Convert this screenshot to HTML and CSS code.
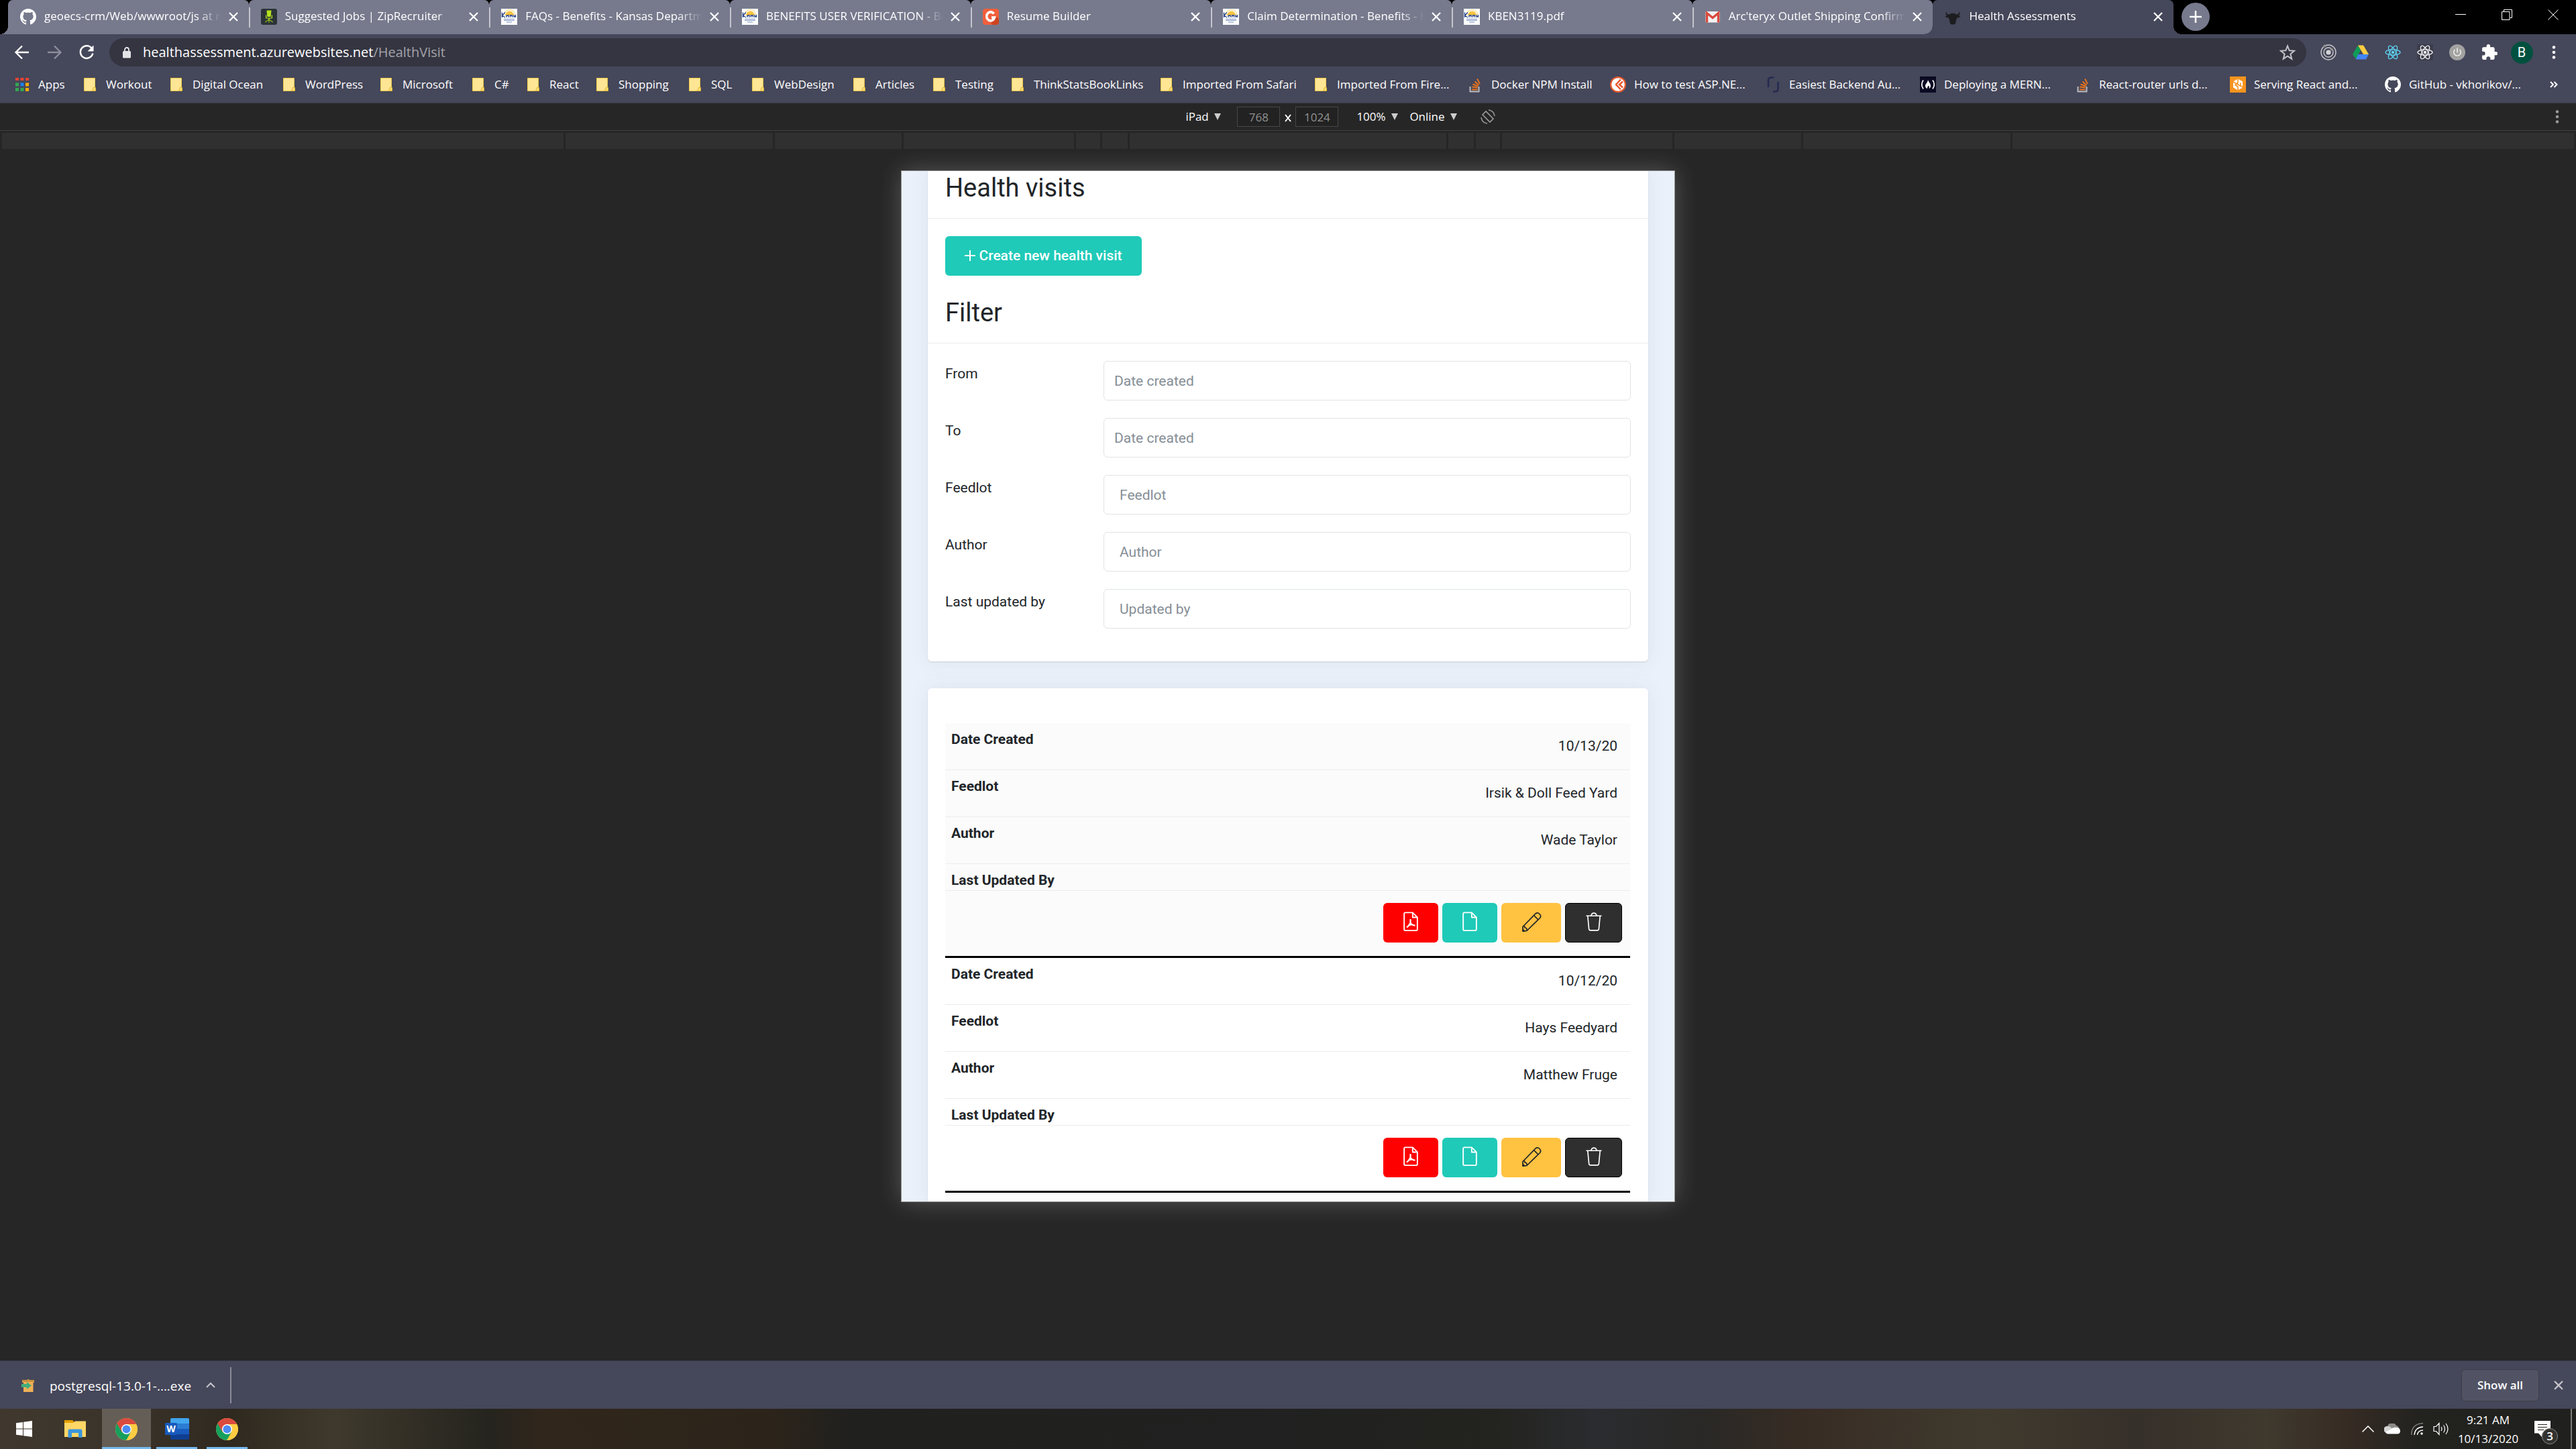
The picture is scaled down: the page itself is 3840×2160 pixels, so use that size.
FILE: index.html
```html
<!DOCTYPE html>
<html lang="en">
<head>
<meta charset="utf-8">
<meta name="viewport" content="width=device-width, initial-scale=1">
<title>Health Assessments</title>
<link rel="stylesheet" href="styles.css">
</head>
<body>
<svg class="defs" aria-hidden="true">
  <defs>
    <symbol id="github" viewBox="0 0 16 16"><path fill="#fff" d="M8 0C3.58 0 0 3.58 0 8c0 3.54 2.29 6.53 5.47 7.59.4.07.55-.17.55-.38 0-.19-.01-.82-.01-1.49-2.01.37-2.53-.49-2.69-.94-.09-.23-.48-.94-.82-1.13-.28-.15-.68-.52-.01-.53.63-.01 1.08.58 1.23.82.72 1.21 1.87.87 2.33.66.07-.52.28-.87.51-1.07-1.78-.2-3.64-.89-3.64-3.95 0-.87.31-1.59.82-2.15-.08-.2-.36-1.02.08-2.12 0 0 .67-.21 2.2.82.64-.18 1.32-.27 2-.27s1.36.09 2 .27c1.53-1.04 2.2-.82 2.2-.82.44 1.1.16 1.92.08 2.12.51.56.82 1.27.82 2.15 0 3.07-1.87 3.75-3.65 3.95.29.25.54.73.54 1.48 0 1.07-.01 1.93-.01 2.2 0 .21.15.46.55.38A8.01 8.01 0 0 0 16 8c0-4.42-3.58-8-8-8z"/></symbol>
    <symbol id="zip" viewBox="0 0 24 24"><rect width="24" height="24" rx="3" fill="#2b3338"/><path fill="#b4e11e" d="M8.500 2.500h7l-.8 9.500h-5.400zM7 9.500h1.200v4h7.600v-4H17v5h-4.200v2.200h-1.600v-2.200H7z"/><path d="M12 16l-5 3.500M12 16l5 3.500M12 16v5M7 18.500v2M17 18.500v2" stroke="#8fb51c" stroke-width="1.200" fill="none"/></symbol>
    <symbol id="kansas" viewBox="0 0 24 24"><rect width="24" height="24" fill="#fff"/><path d="M6 10a6.500 6.500 0 0 1 13 0z" fill="#f9c440"/><path d="M4 10a8.500 8.500 0 0 1 17 0" fill="none" stroke="#fae3a0" stroke-width="1.500"/><path d="M1.500 5.500v7.500M6 5.500l-4.500 4.500L6 13M8 9.500v3.500M11 9v4M13.500 9v4M16.500 9v4M19 9v4M21.500 9v4M8 10h3M13.500 10h3M19 11.500h3" stroke="#24418a" stroke-width="1.300" fill="none"/><path d="M4 15.500h16M4 17.500h16M8 20h8" stroke="#7d92c0" stroke-width="1.100"/></symbol>
    <symbol id="g2" viewBox="0 0 24 24"><rect width="24" height="24" rx="4" fill="#f15f3c"/><path d="M12 21l9-9 3 3v5a4 4 0 0 1-4 4h-6z" fill="#cf4421"/><path d="M16.500 7.500A6 6.500 0 1 0 17.500 13h-4.500" fill="none" stroke="#fff" stroke-width="3.600"/></symbol>
    <symbol id="gmail" viewBox="0 0 24 24"><rect x="1.500" y="4" width="21" height="16.500" rx="1.500" fill="#f2f2f2"/><path d="M3.500 20.500V6.500L12 13.500l8.500-7v14" fill="none" stroke="#d9493c" stroke-width="3.400"/></symbol>
    <symbol id="cow" viewBox="0 0 24 24"><path fill="#1d1d20" d="M3 4c-1 3 1 4.500 4 4.500C9 6 15 6 17 8.500c3 0 5-1.500 4-4.500 2 2 2 5-.5 6.500l3 .5c-1 2-3.500 2.500-5.500 2.500-.5 3-1.500 5-2 8.500-1.500 2-6.500 2-8 0C7.500 18.500 6.500 16.500 6 13.500c-2 0-4.500-.5-5.500-2.500l3-.5C1 9 1 6 3 4z"/></symbol>
    <symbol id="x" viewBox="0 0 16 16"><path d="M2 2l12 12M14 2L2 14" stroke="currentColor" stroke-width="2.300" fill="none"/></symbol>
    <symbol id="folder" viewBox="0 0 24 24"><path fill="#ffe694" stroke="#ecc84c" d="M3.500 2.500h16v19h-16z"/><path fill="#ffdf73" stroke="#dfb738" d="M17.500 16.500h3v5h-5z"/></symbol>
    <symbol id="stack" viewBox="0 0 24 24"><path d="M4.500 15v7.500h13V15" fill="none" stroke="#b9bbc0" stroke-width="2"/><path d="M7 19.500h8.500M7.300 15.500l8.300 1M8.500 11.500l7.700 3M11.500 7.500l6 5.500M15 3.500l4 7.500" stroke="#e8731c" stroke-width="2" fill="none"/></symbol>
    <symbol id="dotnet" viewBox="0 0 24 24"><circle cx="12" cy="12" r="12" fill="#e8592c"/><circle cx="12" cy="12" r="9.800" fill="#fff"/><path d="M16 4.500L9 12l7 7.500M19 7.500L14 12l5 4.500" fill="none" stroke="#e8592c" stroke-width="2.500"/></symbol>
    <symbol id="brackets" viewBox="0 0 24 24"><path d="M13 1.500H9.500Q5 1.500 5 6v10M12 22.500h3q4.500 0 4.500-4.500V8" fill="none" stroke="#252b52" stroke-width="2.600"/></symbol>
    <symbol id="fcc" viewBox="0 0 24 24"><rect width="24" height="24" fill="#0a0a23"/><path d="M5 5.500q-4.500 6.500 0 13M19 5.500q4.500 6.500 0 13" stroke="#fff" stroke-width="1.700" fill="none"/><path fill="#fff" d="M12 5c.5 3 4 5 4 9 0 2-1 3.500-2.500 4 1-2 .5-3-1-4.500-.5 2-2 2.500-1.500 4.500C9 17.500 8 16 8 14c0-3 3.500-4.500 4-9z"/></symbol>
    <symbol id="serve" viewBox="0 0 24 24"><rect width="24" height="24" fill="#f7941e"/><path d="M12 3.500l7 4v9l-7 4-7-4v-9z" fill="#fff"/><path d="M12 3.500v6l-4 3 4 3v5M5 8l7 4M19 16l-7-4M16 9.500v5" stroke="#f7941e" stroke-width="1.600" fill="none"/></symbol>
    <symbol id="react" viewBox="0 0 24 24"><g fill="none" stroke="currentColor" stroke-width="1.300"><ellipse cx="12" cy="12" rx="11" ry="4.200"/><ellipse cx="12" cy="12" rx="11" ry="4.200" transform="rotate(60 12 12)"/><ellipse cx="12" cy="12" rx="11" ry="4.200" transform="rotate(120 12 12)"/></g><circle cx="12" cy="12" r="2.200" fill="currentColor"/></symbol>
    <symbol id="kebab" viewBox="0 0 24 24"><g fill="currentColor"><circle cx="12" cy="4.500" r="2.300"/><circle cx="12" cy="12" r="2.300"/><circle cx="12" cy="19.500" r="2.300"/></g></symbol>
    <symbol id="caret" viewBox="0 0 10 10"><path d="M0 0h10L5 10z" fill="#ccc"/></symbol>
    <symbol id="chrome" viewBox="0 0 48 48"><circle cx="24" cy="24" r="24" fill="#ffcd42"/><path d="M24 24L3.200 12A24 24 0 0 0 23 48l12-18z" fill="#17a05d"/><path d="M24 24v-11h21.200A24 24 0 0 0 3.400 11.700L14 30z" fill="#db4a3f"/><path d="M24 13h21.200A24 24 0 0 1 24 48l9.500-18.500z" fill="#ffcd42"/><circle cx="24" cy="24" r="11" fill="#fff"/><circle cx="24" cy="24" r="8.800" fill="#4c8bf5"/></symbol>
    <symbol id="pdf" viewBox="0 0 24 32"><g fill="none" stroke="currentColor" stroke-width="2" stroke-linejoin="round"><path d="M1.500 3.500q0-2 2-2H15l7.500 7.500v19q0 2-2 2h-17q-2 0-2-2z"/><path d="M15 1.500V9h7.500"/></g><path d="M11.500 12v5.500q-1.500 4.500-6 7.500M11.500 17.500q2 4 7.500 4.500M8 21.800q4-1.500 8-1" fill="none" stroke="currentColor" stroke-width="2.400"/></symbol>
    <symbol id="file" viewBox="0 0 24 32"><g fill="none" stroke="currentColor" stroke-width="2" stroke-linejoin="round"><path d="M1.500 3.500q0-2 2-2H15l7.500 7.500v19q0 2-2 2h-17q-2 0-2-2z"/><path d="M15 1.500V9h7.500"/></g></symbol>
    <symbol id="pencil" viewBox="0 0 30 30"><g fill="none" stroke="currentColor" stroke-width="1.700" stroke-linejoin="round"><path d="M2 22.500L21 3q3-2.500 6 .5t.5 6L8 28.500l-6 .8z"/><path d="M18.500 5.500l6.500 6.500M2.500 21.500q3 0 2.500 2.500 3.500 0 3 4"/></g><path d="M2 25l4 4-4 .5z" fill="currentColor"/></symbol>
    <symbol id="trash" viewBox="0 0 26 30"><g fill="none" stroke="currentColor" stroke-width="1.800" stroke-linejoin="round"><path d="M.5 5.500h25M8.500 5q1-4 4.500-4t4.500 4M3 5.500l2 21q.3 2.500 2.500 2.500h11q2.200 0 2.500-2.500l2-21"/></g></symbol>
  </defs>
</svg>

<header class="browser">
  <div class="tabstrip">
    <nav class="tabs" aria-label="Tabs">
      <div class="tab tab-first"><svg class="fav"><use href="#github"/></svg><span class="tab-title">geoecs-crm/Web/wwwroot/js at master</span><button class="tab-close" aria-label="Close tab"><svg><use href="#x"/></svg></button></div>
      <div class="tab"><svg class="fav"><use href="#zip"/></svg><span class="tab-title">Suggested Jobs | ZipRecruiter</span><button class="tab-close" aria-label="Close tab"><svg><use href="#x"/></svg></button></div>
      <div class="tab"><svg class="fav"><use href="#kansas"/></svg><span class="tab-title">FAQs - Benefits - Kansas Department</span><button class="tab-close" aria-label="Close tab"><svg><use href="#x"/></svg></button></div>
      <div class="tab"><svg class="fav"><use href="#kansas"/></svg><span class="tab-title">BENEFITS USER VERIFICATION - Benefits</span><button class="tab-close" aria-label="Close tab"><svg><use href="#x"/></svg></button></div>
      <div class="tab"><svg class="fav"><use href="#g2"/></svg><span class="tab-title">Resume Builder</span><button class="tab-close" aria-label="Close tab"><svg><use href="#x"/></svg></button></div>
      <div class="tab"><svg class="fav"><use href="#kansas"/></svg><span class="tab-title">Claim Determination - Benefits - Kansas</span><button class="tab-close" aria-label="Close tab"><svg><use href="#x"/></svg></button></div>
      <div class="tab"><svg class="fav"><use href="#kansas"/></svg><span class="tab-title">KBEN3119.pdf</span><button class="tab-close" aria-label="Close tab"><svg><use href="#x"/></svg></button></div>
      <div class="tab tab-last"><svg class="fav"><use href="#gmail"/></svg><span class="tab-title">Arc'teryx Outlet Shipping Confirmation</span><button class="tab-close" aria-label="Close tab"><svg><use href="#x"/></svg></button></div>
      <div class="tab tab-active"><svg class="fav"><use href="#cow"/></svg><span class="tab-title">Health Assessments</span><button class="tab-close" aria-label="Close tab"><svg><use href="#x"/></svg></button></div>
    </nav>
    <button class="new-tab" aria-label="New tab"><svg viewBox="0 0 18 18"><path d="M9 0v18M0 9h18" stroke="#fff" stroke-width="2.500"/></svg></button>
    <div class="window-controls">
      <button aria-label="Minimize"><svg viewBox="0 0 16 16"><path d="M0 7.500h16" stroke="#fff" stroke-width="1"/></svg></button>
      <button aria-label="Restore"><svg viewBox="0 0 16 16"><path d="M.5 3.500h11.500v12H.5zM3.500 3.500V.5h12v12h-3" fill="none" stroke="#fff"/></svg></button>
      <button aria-label="Close"><svg viewBox="0 0 16 16"><path d="M.5.5l15 15M15.500.5l-15 15" stroke="#fff"/></svg></button>
    </div>
  </div>

  <div class="toolbar">
    <button class="tool" aria-label="Back"><svg viewBox="0 0 24 24"><path d="M22 12H3M12 2.500L2.500 12l9.500 9.500" fill="none" stroke="#fff" stroke-width="2.400"/></svg></button>
    <button class="tool" aria-label="Forward"><svg viewBox="0 0 24 24"><path d="M2 12h19M12 2.500l9.500 9.500-9.500 9.500" fill="none" stroke="#8c8d9c" stroke-width="2.400"/></svg></button>
    <button class="tool" aria-label="Reload"><svg viewBox="0 0 24 24"><path d="M20 6.500A9.300 9.300 0 1 0 21.300 13.500" fill="none" stroke="#fff" stroke-width="2.500"/><path d="M22.500 1.500v9h-9z" fill="#fff"/></svg></button>
    <form class="omnibox">
      <svg class="lock" viewBox="0 0 12 18"><path d="M3 8V5a3 3 0 0 1 6 0v3" fill="none" stroke="#e4e4e8" stroke-width="1.800"/><rect y="7" width="12" height="10.500" rx="1.500" fill="#e4e4e8"/></svg>
      <a class="url" href="#">healthassessment.azurewebsites.net<span class="url-path">/HealthVisit</span></a>
      <button class="star" type="button" aria-label="Bookmark this page"><svg viewBox="0 0 24 24"><path d="M12 2.500l2.700 6.800 7.300.5-5.600 4.700 1.800 7.200-6.200-4-6.200 4 1.800-7.200L2 9.800l7.300-.5z" fill="none" stroke="#c3c3c8" stroke-width="2"/></svg></button>
    </form>
    <div class="extensions">
      <button class="tool" aria-label="Orbit"><svg viewBox="0 0 24 24"><g fill="none" stroke="#c8c8cb" stroke-width="1.400"><circle cx="12" cy="12" r="11"/><circle cx="12" cy="12" r="7"/></g><circle cx="12" cy="12" r="3.600" fill="#d2d2d4"/><circle cx="6.500" cy="2.500" r="2" fill="#8f8f90"/><circle cx="16.500" cy="7.500" r="2" fill="#8f8f90"/></svg></button>
      <button class="tool" aria-label="Drive"><svg viewBox="0 0 24 24"><path d="M8 1.500l4 7L5 22l-5-7z" fill="#0f9d58"/><path d="M8 1.500h8L24 15h-8z" fill="#ffcd40"/><path d="M8.500 15H24l-4 7.500H4.500z" fill="#4285f4"/></svg></button>
      <button class="tool react-on" aria-label="React tools"><svg><use href="#react"/></svg></button>
      <button class="tool react-off" aria-label="React inspector"><svg><use href="#react"/></svg></button>
      <button class="tool" aria-label="Power"><svg viewBox="0 0 24 24"><circle cx="12" cy="12" r="12" fill="#a2a2a1"/><path d="M12 5.500v7M8.500 8a5.200 5.200 0 1 0 7 0" fill="none" stroke="#f2f2f2" stroke-width="1.500"/></svg></button>
      <button class="tool" aria-label="Extensions"><svg viewBox="1 1 22 22"><path fill="#fff" d="M20.500 11H19V7c0-1.100-.9-2-2-2h-4V3.500a2.500 2.500 0 0 0-5 0V5H4c-1.100 0-2 .9-2 2v3.800h1.500a2.700 2.700 0 0 1 0 5.400H2V20c0 1.100.9 2 2 2h3.800v-1.500a2.700 2.700 0 0 1 5.400 0V22H17c1.100 0 2-.9 2-2v-4h1.500a2.500 2.500 0 0 0 0-5z"/></svg></button>
      <button class="tool"><span class="avatar">B</span></button>
      <button class="tool menu" aria-label="Menu"><svg><use href="#kebab"/></svg></button>
    </div>
  </div>

  <nav class="bookmarks" aria-label="Bookmarks">
    <a href="#"><svg viewBox="0 0 24 24"><path fill="#ea4335" d="M2 2h5v4H2zM9.500 2h5v4h-5zM17 2h5v4h-5z"/><path fill="#34a853" d="M2 9.500h5v5H2zM2 17h5v5H2zM9.500 17h5v5h-5z"/><path fill="#1a80f5" d="M9.500 9.500h5v5h-5z"/><path fill="#fbaa05" d="M17 9.500h5v5h-5zM17 17h5v5h-5z"/></svg>Apps</a>
    <a href="#"><svg><use href="#folder"/></svg>Workout</a>
    <a href="#"><svg><use href="#folder"/></svg>Digital Ocean</a>
    <a href="#"><svg><use href="#folder"/></svg>WordPress</a>
    <a href="#"><svg><use href="#folder"/></svg>Microsoft</a>
    <a href="#"><svg><use href="#folder"/></svg>C#</a>
    <a href="#"><svg><use href="#folder"/></svg>React</a>
    <a href="#"><svg><use href="#folder"/></svg>Shopping</a>
    <a href="#"><svg><use href="#folder"/></svg>SQL</a>
    <a href="#"><svg><use href="#folder"/></svg>WebDesign</a>
    <a href="#"><svg><use href="#folder"/></svg>Articles</a>
    <a href="#"><svg><use href="#folder"/></svg>Testing</a>
    <a href="#"><svg><use href="#folder"/></svg>ThinkStatsBookLinks</a>
    <a href="#"><svg><use href="#folder"/></svg>Imported From Safari</a>
    <a href="#"><svg><use href="#folder"/></svg>Imported From Fire...</a>
    <a href="#"><svg><use href="#stack"/></svg>Docker NPM Install</a>
    <a href="#"><svg><use href="#dotnet"/></svg>How to test ASP.NE...</a>
    <a href="#"><svg><use href="#brackets"/></svg>Easiest Backend Au...</a>
    <a href="#"><svg><use href="#fcc"/></svg>Deploying a MERN...</a>
    <a href="#"><svg><use href="#stack"/></svg>React-router urls d...</a>
    <a href="#"><svg><use href="#serve"/></svg>Serving React and...</a>
    <a href="#"><svg><use href="#github"/></svg>GitHub - vkhorikov/...</a>
    <button class="overflow" aria-label="More bookmarks"><svg viewBox="0 0 12 10"><path d="M1 1l4 4-4 4M6.500 1l4 4-4 4" fill="none" stroke="#fff" stroke-width="2"/></svg></button>
  </nav>
</header>

<main class="emulator">
  <div class="device-bar">
    <form class="device-tools">
      <label class="picker"><select aria-label="Device"><option>iPad</option></select><svg><use href="#caret"/></svg></label>
      <input class="size" value="768" aria-label="Width">
      <span class="times"><svg viewBox="0 0 12 12"><path d="M2 1l8 10M10 1L2 11" stroke="#fff" stroke-width="2"/></svg></span>
      <input class="size" value="1024" aria-label="Height">
      <label class="picker"><select aria-label="Zoom"><option>100%</option></select><svg><use href="#caret"/></svg></label>
      <label class="picker"><select aria-label="Throttling"><option>Online</option></select><svg><use href="#caret"/></svg></label>
      <button class="rotate" type="button" aria-label="Rotate"><svg viewBox="0 0 24 24"><g fill="none" stroke="#9a9a9a" stroke-width="1.600"><path d="M4 9l5-5 11 11-5 5z"/><path d="M13 2q8 1 9 9M11 22q-8-1-9-9"/></g></svg></button>
    </form>
    <button class="device-menu" aria-label="More options"><svg><use href="#kebab"/></svg></button>
  </div>
  <div class="breakpoints"><i></i><i></i><i></i><i></i><i></i><i></i><i></i><i></i><i></i><i></i><i></i><i></i><i></i></div>

  <div class="stage">
    <div class="device">
      <section class="card card-filter">
        <h1>Health visits</h1>
        <div class="card-actions">
          <button class="create"><svg viewBox="0 0 16 16"><path d="M8 0v16M0 8h16" stroke="#fff" stroke-width="2"/></svg>Create new health visit</button>
        </div>
        <h1>Filter</h1>
        <form class="filters">
          <label for="from">From</label><input id="from" class="date" placeholder="Date created">
          <label for="to">To</label><input id="to" class="date" placeholder="Date created">
          <label for="feedlot">Feedlot</label><input id="feedlot" placeholder="Feedlot">
          <label for="author">Author</label><input id="author" placeholder="Author">
          <label for="updated">Last updated by</label><input id="updated" placeholder="Updated by">
        </form>
      </section>

      <section class="card card-list">
        <table class="visits">
          <tbody>
            <tr><th scope="row">Date Created</th><td>10/13/20</td></tr>
            <tr><th scope="row">Feedlot</th><td>Irsik &amp; Doll Feed Yard</td></tr>
            <tr><th scope="row">Author</th><td>Wade Taylor</td></tr>
            <tr class="row-short"><th scope="row">Last Updated By</th><td></td></tr>
            <tr class="row-actions"><td colspan="2"><div class="actions">
              <button class="act act-pdf" aria-label="PDF"><svg><use href="#pdf"/></svg></button>
              <button class="act act-file" aria-label="Open"><svg><use href="#file"/></svg></button>
              <button class="act act-edit" aria-label="Edit"><svg><use href="#pencil"/></svg></button>
              <button class="act act-delete" aria-label="Delete"><svg><use href="#trash"/></svg></button>
            </div></td></tr>
          </tbody>
          <tbody>
            <tr><th scope="row">Date Created</th><td>10/12/20</td></tr>
            <tr><th scope="row">Feedlot</th><td>Hays Feedyard</td></tr>
            <tr><th scope="row">Author</th><td>Matthew Fruge</td></tr>
            <tr class="row-short"><th scope="row">Last Updated By</th><td></td></tr>
            <tr class="row-actions"><td colspan="2"><div class="actions">
              <button class="act act-pdf" aria-label="PDF"><svg><use href="#pdf"/></svg></button>
              <button class="act act-file" aria-label="Open"><svg><use href="#file"/></svg></button>
              <button class="act act-edit" aria-label="Edit"><svg><use href="#pencil"/></svg></button>
              <button class="act act-delete" aria-label="Delete"><svg><use href="#trash"/></svg></button>
            </div></td></tr>
          </tbody>
          <tbody>
            <tr class="row-edge"><td colspan="2"></td></tr>
          </tbody>
        </table>
      </section>
    </div>
  </div>
</main>

<footer class="bottom">
  <div class="downloads">
    <button class="download"><svg class="box" viewBox="0 0 20 22"><path d="M1 3h5l4-2 4 2h5v3h-1.500v14H3V6H1z" fill="#efb057"/><path d="M1 2h18v3H1z" fill="#c98f3d"/><path d="M0 8h8V5l7 5.500L8 16v-3H0z" fill="#3fae7c"/></svg><span>postgresql-13.0-1-....exe</span></button>
    <button class="download-menu" aria-label="Download options"><svg viewBox="0 0 14 9"><path d="M1 8l6-6 6 6" fill="none" stroke="#c2c2c8" stroke-width="2.200"/></svg></button>
    <button class="show-all">Show all</button>
    <button class="close-shelf" aria-label="Close downloads"><svg><use href="#x"/></svg></button>
  </div>
  <div class="taskbar">
    <button class="start" aria-label="Start"><svg viewBox="0 0 24 24"><path fill="#fff" d="M0 3.300l10-1.400v9.600H0zM11 1.800L24 0v11.500H11zM0 12.500h10v9.600L0 20.700zM11 12.500h13V24l-13-1.800z"/></svg></button>
    <button class="app explorer" aria-label="File Explorer"><svg viewBox="0 0 32 28"><path d="M0 1h12l3 3v6H0z" fill="#e5a000"/><path d="M0 5h13l3-2.500h16V26H0z" fill="#ffd766"/><path d="M5.500 26V17q0-2.500 2.500-2.500h16q2.500 0 2.500 2.500v10H21v-7H11v7H5.500z" fill="#3a96dd"/></svg></button>
    <button class="app app-open app-active" aria-label="Chrome"><svg><use href="#chrome"/></svg></button>
    <button class="app app-open" aria-label="Word"><svg class="word" viewBox="0 0 36 32"><path d="M8 2q0-2 2-2h24q2 0 2 2v6H8z" fill="#41a5ee"/><path d="M8 8h28v8H8z" fill="#2b7cd3"/><path d="M8 16h28v8H8z" fill="#185abd"/><path d="M8 24h28v6q0 2-2 2H10q-2 0-2-2z" fill="#103f91"/><rect y="7" width="18" height="18" rx="1.500" fill="#185abd"/><text class="word-letter" x="9" y="21" text-anchor="middle">W</text></svg></button>
    <button class="app app-open" aria-label="Chrome, second window"><svg><use href="#chrome"/></svg></button>
    <div class="tray">
      <svg class="up" viewBox="0 0 18 10"><path d="M.5 9.500L9 1l8.500 8.500" fill="none" stroke="#fff" stroke-width="1.500"/></svg>
      <svg class="cloud" viewBox="0 0 24 16"><path d="M5 4a7 7 0 0 1 13-1 5 5 0 0 1 4 4L10 9z" fill="#8d8b88"/><path d="M4 14a5 5 0 0 1 1-10q4-.5 6 3l9 5z" fill="#d4d4d4"/><path d="M2 12.500q6-2 10-5.500 4-2 6-1a5 5 0 0 1 6 5q0 4.500-4.500 4.500h-14Q3 15.500 2 12.500z" fill="#fff"/></svg>
      <svg class="wifi" viewBox="0 0 18 18"><g fill="none" stroke="#fff" stroke-width="1.300"><path d="M.7 18Q.7 1.500 18 .7" stroke="#8a8a86"/><path d="M5 18Q6 6.500 18 6M9.500 18q.5-6.500 8.500-7"/></g><circle cx="16" cy="16" r="1.800" fill="#fff"/></svg>
      <svg class="sound" viewBox="0 0 24 20"><g fill="none" stroke="#fff" stroke-width="1.200"><path d="M1 6.500h3.500L9 1.500v17l-4.500-5H1zM12 7q2 3 0 6M15.500 4.500q4 5.500 0 11M19 2q6 8 0 16"/></g></svg>
      <time class="clock">9:21 AM<br>10/13/2020</time>
      <div class="notices"><svg viewBox="0 0 24 24"><path d="M0 0h24v18.500H12L11 24l-5-5.500H0z" fill="#fff"/><path d="M5 5.500h14M5 9.500h14M5 13.500h9" stroke="#24231f" stroke-width="1.200"/></svg><span class="badge">3</span></div>
    </div>
  </div>
</footer>
</body>
</html>
```
FILE: styles.css
```css
:root {
  --chrome: #45475a;
  --tab: #777a8d;
  --panel: #262626;
  --ui: "Open Sans", "Noto Sans", sans-serif;
  --page: Roboto, sans-serif;
}

* { box-sizing: border-box; }

body {
  margin: 0;
  min-height: 100vh;
  display: flex;
  flex-direction: column;
  background: var(--panel);
  color: #fff;
  font: 17px/24px var(--ui);
}

svg { display: block; flex: none; }
.defs { width: 0; height: 0; position: absolute; }

button, select, input { font: inherit; color: inherit; }
button {
  display: flex;
  align-items: center;
  justify-content: center;
  padding: 0;
  border: 0;
  background: none;
}
a { color: inherit; text-decoration: none; }

/* Tab strip */
.tabstrip { display: flex; height: 51px; background: #000; }
.tabs { display: flex; flex: 0 1 3228px; margin-left: 12px; min-width: 0; }
.tab {
  position: relative;
  display: flex;
  flex: 1 1 0;
  align-items: center;
  min-width: 0;
  padding: 0 15px 1px 18px;
  background: var(--tab);
  border-radius: 7px 7px 0 0;
}
.tab + .tab::before {
  content: "";
  position: absolute;
  left: 0;
  top: 11px;
  width: 2px;
  height: 30px;
  background: #c4c5cd;
}
.tab-first::before {
  content: "";
  position: absolute;
  left: -12px;
  bottom: 0;
  width: 12px;
  height: 12px;
  background: radial-gradient(circle at 0 0, transparent 12px, var(--tab) 12px);
}
.tab-last { box-shadow: 12px 0 0 -6px var(--chrome); border-bottom-right-radius: 9px; }
.tab.tab-active { background: var(--chrome); }
.tab.tab-active::before { left: -12px; top: auto; bottom: 0; width: 12px; height: 12px; background: radial-gradient(circle at 0 0, transparent 11px, var(--chrome) 12px); }
.tab-active::after {
  content: "";
  position: absolute;
  right: -12px;
  bottom: 0;
  width: 12px;
  height: 12px;
  background: radial-gradient(circle at 100% 0, transparent 12px, var(--chrome) 12px);
}
.fav { width: 24px; height: 24px; }
.tab-title {
  flex: 1;
  min-width: 0;
  margin-left: 12px;
  margin-right: 10px;
  padding-bottom: 2px;
  overflow: hidden;
  white-space: nowrap;
  mask-image: linear-gradient(to left, transparent, #000 36px);
}
.tab-close { width: 16px; height: 16px; }
.tab-close svg { width: 16px; height: 16px; }
.new-tab { width: 42px; height: 42px; margin: 4px 0 0 12px; border-radius: 50%; background: var(--tab); }
.new-tab svg { width: 18px; height: 18px; }
.window-controls { display: flex; margin-left: auto; }
.window-controls button { width: 69px; height: 43px; }
.window-controls svg { width: 16px; height: 16px; }

/* Address bar */
.toolbar { display: flex; align-items: center; height: 48px; padding: 6px 9px 0; background: var(--chrome); }
.tool { width: 48px; height: 42px; }
.tool svg { width: 24px; height: 24px; }
.omnibox {
  display: flex;
  flex: 1;
  align-items: center;
  height: 42px;
  margin: 0 9px 0 10px;
  padding: 0 16px 0 20px;
  border-radius: 21px;
  background: #343541;
}
.lock { width: 12px; height: 18px; }
.url { margin-left: 18px; font-size: 20px; }
.url-path { color: #a3a3a9; }
.star { margin-left: auto; }
.star svg { width: 24px; height: 24px; }
.extensions { display: flex; }
.react-on { color: #5ed3f3; }
.react-off svg { color: #f2f2f2; background: #3b3d4c; }
.avatar { width: 33px; height: 33px; border-radius: 50%; background: #00503f; font: 20px/33px var(--page); }

/* Bookmarks */
.bookmarks {
  display: grid;
  grid-template-columns: 101px 129px 168px 145px 137px 82px 103px 138px 94px 151px 119px 117px 222px 230px 230px 213px 231px 231px 231px 231px 231px 231px 1fr;
  align-items: center;
  height: 55px;
  padding: 0 27px 0 21px;
  border-bottom: 1px solid #3b3c48;
  background: var(--chrome);
  white-space: nowrap;
  overflow: hidden;
}
.bookmarks a { display: flex; align-items: center; gap: 12px; }
.bookmarks a svg { width: 24px; height: 24px; }
.overflow { justify-self: end; }
.overflow svg { width: 12px; height: 10px; }

/* Device toolbar */
.emulator { display: flex; flex: 1; flex-direction: column; }
.device-bar {
  display: grid;
  grid-template-columns: 46% auto 1fr;
  align-items: center;
  height: 41px;
  border-bottom: 1px solid #404040;
}
.device-tools {
  grid-column: 2;
  display: grid;
  grid-template-columns: 77px 64px 23px 91px 79px 105px 24px;
  align-items: center;
  padding-left: 1px;
}
.picker { display: flex; align-items: center; gap: 8px; }
.picker select { appearance: none; padding: 0; border: 0; background: none; }
.picker svg { width: 10px; height: 10px; }
.size { width: 64px; height: 30px; padding: 0; border: 1px solid #474747; background: #222; color: #909090; text-align: center; }
.times { display: grid; place-items: center; padding: 4px 0 0; }
.times svg { width: 12px; height: 12px; }
.rotate svg { width: 24px; height: 24px; }
.device-menu { justify-self: end; margin-right: 16px; color: #9a9a9a; }
.device-menu svg { width: 24px; height: 24px; }
.breakpoints {
  display: grid;
  grid-template-columns: 1fr 309px 189px 254px 36px 38px 472px 38px 36px 254px 189px 309px 1fr;
  gap: 3px;
  margin-top: 3px;
  padding: 0 3px;
}
.breakpoints i { height: 24px; background: #303030; }

/* Emulated viewport */
.stage { display: flex; flex: 1; justify-content: center; align-items: flex-start; padding: 33px 16px 48px; }
.device {
  flex: 0 1 1152px;
  min-width: 0;
  padding: 0 39px;
  overflow: hidden;
  background: #ebf1fa;
  color: #212529;
  font: 21px/30px var(--page);
  box-shadow: 0 0 0 1px #8c8c8c, 0 0 34px rgba(255, 255, 255, .24);
}
.card { background: #fff; box-shadow: 0 0 30px rgba(60, 80, 110, .08), 0 1px 2px rgba(0, 0, 0, .12); }
.card-filter { margin-bottom: 40px; padding-bottom: 49px; border-radius: 0 0 6px 6px; }
.card-list { padding: 52px 27px 0 26px; border-radius: 6px 6px 0 0; }
h1 { margin: 0; padding: 0 26px 20px; border-bottom: 1px solid #ededed; font-size: 38px; font-weight: 400; line-height: 50px; }
.card-actions { padding: 26px 26px 30px; }
.create {
  width: 293px;
  height: 59px;
  gap: 5px;
  padding-bottom: 2px;
  border-radius: 6px;
  background: #1fcab8;
  color: #fff;
  font-weight: 500;
}
.create svg { width: 16px; height: 16px; }
.filters { display: grid; grid-template-columns: 236px 1fr; row-gap: 26px; padding: 26px 26px 0; }
.filters label { line-height: 38px; }
.filters input {
  height: 59px;
  min-width: 0;
  padding: 0 23px;
  border: 1px solid #e0e3e6;
  border-radius: 6px;
  background: #fff;
}
.filters .date { padding: 0 15px; }
.filters input::placeholder { color: #868e96; opacity: 1; }

/* Visit records */
.visits { width: 100%; border-spacing: 0; }
.visits tbody:nth-child(odd) { background: #fbfbfb; }
.visits tr { height: 70px; }
.visits th, .visits td { padding: 9px 9px 0; border-bottom: 1px solid #ececec; vertical-align: top; }
.visits th { text-align: left; font-weight: 700; }
.visits td { padding: 19px 19px 0; text-align: right; }
.visits .row-short { height: 40px; }
.visits .row-short td { padding-top: 0; }
.visits .row-actions { height: 100px; }
.visits .row-actions td { padding: 18px 12px 0; border-bottom: 3px solid #000; }
.visits .row-edge { height: 13px; }
.visits .row-edge td { padding: 0; border: 0; }
.actions { display: flex; justify-content: flex-end; gap: 6px; }
.act { width: 82px; height: 59px; padding-bottom: 4px; border-radius: 6px; color: #fff; }
.act svg { width: 24px; height: 30px; }
.act-pdf { background: #f00; }
.act-file { background: #1fcab8; }
.act-edit { width: 89px; background: #ffc241; color: #212529; }
.act-edit svg { width: 30px; }
.act-delete { width: 85px; border: 1px solid #000; background: #2f2f2f; }

/* Download shelf */
.downloads { display: flex; align-items: center; height: 72px; padding: 0 18px 0 32px; border-top: 1px solid #3a3b49; background: var(--chrome); }
.download { gap: 22px; padding-top: 2px; font-size: 19px; }
.box { width: 20px; height: 22px; }
.download-menu { width: 60px; height: 54px; border-right: 2px solid #8b8c99; }
.download-menu svg { width: 14px; height: 9px; }
.show-all { width: 116px; height: 48px; margin-left: auto; border: 1px solid #3d3e4a; border-radius: 6px; background: #515364; font-weight: 600; }
.close-shelf { margin-left: 21px; color: #c2c2c8; }
.close-shelf svg { width: 16px; height: 16px; }

/* Taskbar */
.taskbar {
  display: flex;
  height: 60px;
  background: linear-gradient(90deg, #40382e, #3a3329 5%, #2f291f 9%, #3f392d 13%, #25241e 19%, #30261c 21%, #2c241a 30%, #20201f 33%, #202120 50%, #23231f 58%, #2b2c30 62%, #292826 66%, #372c24 70%, #403a2e 77%, #36302a 83%, #3f392e 88%, #372c24 91%, #22221f 94%, #20201e);
}
.start { width: 72px; }
.start svg { width: 24px; height: 24px; }
.app { width: 73px; margin-right: 2px; }
.app svg { width: 33px; height: 33px; }
.app-open { background: linear-gradient(#76b9ed, #76b9ed) center bottom / 61px 3px no-repeat; }
.explorer { width: 80px; margin: 0; }
.explorer svg { width: 32px; height: 28px; }
.app-active { background: linear-gradient(#76b9ed, #76b9ed) center bottom / 73px 3px no-repeat, #655e56; }
.app .word { width: 36px; height: 32px; }
.word-letter { font: 700 14px var(--ui); fill: #fff; }
.tray { display: flex; align-items: center; margin-left: auto; padding-right: 6px; }
.up { width: 18px; height: 10px; margin-right: 15px; }
.cloud { width: 24px; height: 16px; margin-right: 16px; }
.wifi { width: 18px; height: 18px; margin-right: 15px; }
.sound { width: 24px; height: 20px; margin-right: 9px; }
.clock { width: 98px; padding-top: 1px; font-size: 17px; line-height: 28px; text-align: center; white-space: nowrap; }
.notices { position: relative; width: 56px; height: 60px; margin-left: 20px; padding-top: 18px; border-right: 2px solid #7d7d7a; }
.notices svg { width: 24px; height: 24px; }
.badge {
  position: absolute;
  left: 11px;
  top: 29px;
  width: 24px;
  height: 24px;
  border: 1px solid #8a8a88;
  border-radius: 50%;
  background: #33322f;
  font-size: 17px;
  font-weight: 600;
  line-height: 22px;
  text-align: center;
}
```
